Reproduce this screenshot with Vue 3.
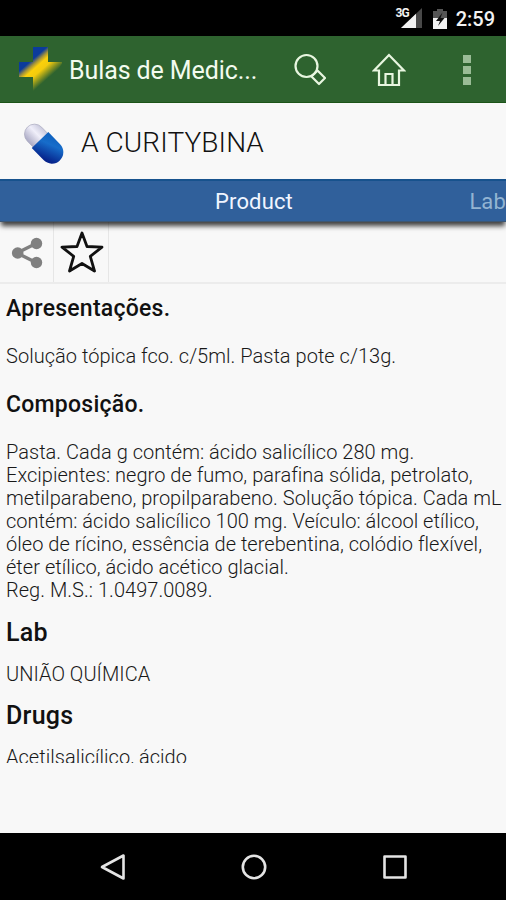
<template>
  <div class="screen">
    <!-- Status bar -->
    <header class="status-bar">
      <div class="signal">
        <span class="network">3G</span>
        <svg width="21" height="20" viewBox="0 0 21 20">
          <path d="M21 0V20H0z" fill="#484848" />
          <path d="M15 5.700V20H0z" fill="#f2f2f2" />
        </svg>
      </div>
      <svg class="battery" width="14" height="21" viewBox="0 0 14 21">
        <path d="M4 3V1h6v2h4v8H0V3z" fill="#555" />
        <path d="M0 10h14v11H0z" fill="#f2f2f2" />
        <path d="M9.500 4.500L3 13h4l-2 5 6.500-8H7.500z" fill="#111" />
      </svg>
      <span class="clock">2:59</span>
    </header>

    <!-- App bar -->
    <div class="app-bar">
      <svg class="logo" width="46" height="46" viewBox="0 0 46 46">
        <defs>
          <linearGradient id="cross" gradientUnits="userSpaceOnUse" x1="8" y1="8" x2="36" y2="40">
            <stop offset="0" stop-color="#0b3b9c" />
            <stop offset="0.23" stop-color="#0b3b9c" />
            <stop offset="0.33" stop-color="#a3923a" />
            <stop offset="0.42" stop-color="#fbd00b" />
            <stop offset="0.55" stop-color="#f3cb0d" />
            <stop offset="0.8" stop-color="#2e632f" />
          </linearGradient>
        </defs>
        <path d="M17 1h15v15h15L37 31h-5v15H17V31H3V16h14z" fill="url(#cross)" />
      </svg>
      <h1 class="app-title">Bulas de Medic...</h1>
      <button class="action search">
        <svg width="32" height="34" viewBox="0 0 32 34" fill="none" stroke="#e8f6e0" stroke-width="2.200">
          <circle cx="12.500" cy="13" r="11" />
          <path d="M17.500 23.500l6-6 7.500 7.500-6 6z" stroke-linejoin="round" />
        </svg>
      </button>
      <button class="action home">
        <svg width="34" height="34" viewBox="0 0 34 34" fill="none" stroke="#e8f6e0" stroke-width="2.200">
          <path d="M17 2L2 17.500h5V32h20V17.500h5zM13.500 32V21h7V32" />
        </svg>
      </button>
      <button class="action more"><i></i><i></i><i></i></button>
    </div>

    <!-- Medicine name -->
    <div class="medicine">
      <svg class="pill" width="42" height="42" viewBox="0 0 42 42">
        <defs>
          <linearGradient id="capWhite" x1="0" y1="0" x2="0" y2="1">
            <stop offset="0" stop-color="#c9c9dd" />
            <stop offset="0.4" stop-color="#f0effa" />
            <stop offset="1" stop-color="#aaa9c4" />
          </linearGradient>
          <linearGradient id="capBlue" x1="0" y1="0" x2="0.500" y2="1">
            <stop offset="0" stop-color="#0d5fbd" />
            <stop offset="0.4" stop-color="#176dca" />
            <stop offset="1" stop-color="#06248c" />
          </linearGradient>
        </defs>
        <g transform="translate(20.500 20.500) rotate(46)">
          <path d="M-4-10h-9a10 10 0 0 0 0 20h9z" fill="url(#capWhite)" stroke="#aaaac0" stroke-width="0.700" />
          <path d="M-5-11.500H12a11.500 11.500 0 0 1 0 23H-5z" fill="url(#capBlue)" />
        </g>
      </svg>
      <h2 class="medicine-name">A CURITYBINA</h2>
    </div>

    <!-- Tabs -->
    <nav class="tabs">
      <span class="tab active">Product</span>
      <span class="tab next">Lab</span>
    </nav>

    <!-- Share and favorite -->
    <div class="tools">
      <button class="tool share">
        <svg width="32" height="32" viewBox="0 0 32 32" fill="#808080">
          <path d="M25 6.500L6 16l19 9.500" fill="none" stroke="#808080" stroke-width="3.400" />
          <circle cx="6.700" cy="16" r="5.800" />
          <circle cx="25.500" cy="6.500" r="5.700" />
          <circle cx="25.500" cy="25.500" r="5.700" />
        </svg>
      </button>
      <button class="tool favorite">
        <svg width="46" height="44" viewBox="0 0 46 44">
          <path d="M23 3l5 13.500L43 17.200 31.300 26.300 35.500 41 23 33.500 10.500 41l4.200-14.700L3 17.200l15-.7z" fill="none" stroke="#111" stroke-width="2.800" stroke-linejoin="round" />
        </svg>
      </button>
    </div>

    <!-- Leaflet text -->
    <main class="leaflet">
      <section v-for="section in sections" :key="section.title" :class="['section', section.kind]">
        <h3>{{ section.title }}</h3>
        <p v-for="line in section.lines" :key="line">{{ line }}</p>
      </section>
    </main>

    <!-- Android navigation -->
    <footer class="nav-bar">
      <svg width="28" height="28" viewBox="0 0 28 28"><path d="M24.500 2.500v23L3 14z" /></svg>
      <svg width="28" height="28" viewBox="0 0 28 28"><circle cx="14" cy="14" r="11.200" /></svg>
      <svg width="28" height="28" viewBox="0 0 28 28"><path d="M3.500 3.500h21v21h-21z" /></svg>
    </footer>
  </div>
</template>

<script setup>
const sections = [
  {
    title: 'Apresentações.',
    kind: 'detail',
    lines: ['Solução tópica fco. c/5ml. Pasta pote c/13g.'],
  },
  {
    title: 'Composição.',
    kind: 'detail',
    lines: [
      'Pasta. Cada g contém: ácido salicílico 280 mg.',
      'Excipientes: negro de fumo, parafina sólida, petrolato,',
      'metilparabeno, propilparabeno. Solução tópica. Cada mL',
      'contém: ácido salicílico 100 mg. Veículo: álcool etílico,',
      'óleo de rícino, essência de terebentina, colódio flexível,',
      'éter etílico, ácido acético glacial.',
      'Reg. M.S.: 1.0497.0089.',
    ],
  },
  { title: 'Lab', kind: 'summary', lines: ['UNIÃO QUÍMICA'] },
  { title: 'Drugs', kind: 'summary', lines: ['Acetilsalicílico, ácido'] },
]
</script>

<style>
body {
  margin: 0;
}
</style>

<style scoped>
.screen {
  display: flex;
  flex-direction: column;
  width: 506px;
  height: 900px;
  overflow: hidden;
  background: #f8f8f8;
  font-family: Roboto, sans-serif;
  color: #111;
}
h1, h2, h3, p {
  margin: 0;
  white-space: nowrap;
}
button {
  display: flex;
  padding: 0;
  border: none;
  background: none;
}
svg {
  display: block;
  flex: none;
}
.status-bar {
  height: 36px;
  flex: none;
  display: flex;
  align-items: flex-start;
  justify-content: flex-end;
  box-sizing: border-box;
  padding: 8px 11px 0 0;
  background: #000;
  color: #f2f2f2;
}
.signal {
  display: flex;
}
.network {
  font-size: 12px;
  font-weight: 700;
  line-height: 11px;
  letter-spacing: -1px;
  margin-right: -8px;
  z-index: 1;
}
.battery {
  margin: 0 9px 0 11px;
}
.clock {
  font-size: 20px;
  font-weight: 500;
  line-height: 22px;
}
.app-bar {
  height: 67px;
  flex: none;
  display: flex;
  align-items: center;
  box-sizing: border-box;
  padding-left: 16px;
  background: #2e632f;
  border-bottom: 1px solid #1c5418;
}
.app-title {
  width: 194px;
  margin-left: 7px;
  margin-top: 3px;
  font-size: 25px;
  font-weight: 400;
  line-height: 32px;
  letter-spacing: -0.1px;
  color: #f3fbef;
}
.search {
  margin: 2px 0 0 31px;
}
.home {
  margin: 2px 0 0 46px;
}
.more {
  flex-direction: column;
  gap: 3px;
  margin: 1px 0 0 57px;
}
.more i {
  width: 8px;
  height: 8px;
  background: #9abc96;
}
.medicine {
  height: 76px;
  flex: none;
  display: flex;
  align-items: center;
  padding-left: 23px;
}
.pill {
  margin-top: 6px;
}
.medicine-name {
  margin-left: 16px;
  margin-top: 3px;
  font-size: 28px;
  font-weight: 300;
  line-height: 34px;
  letter-spacing: 0.1px;
}
.tabs {
  height: 43px;
  flex: none;
  display: flex;
  box-sizing: border-box;
  padding-left: 215px;
  background: #30609b;
  border-top: 2px solid #17528d;
  border-bottom: 1px solid #3c5673;
  box-shadow: 0 5px 5px -1px rgba(0, 0, 0, 0.75);
  z-index: 1;
}
.tab {
  font-size: 22px;
  line-height: 41px;
  letter-spacing: 0.15px;
}
.tab.active {
  width: 255px;
  color: #f0f5ff;
}
.tab.next {
  color: #93b4d2;
}
.tools {
  height: 62px;
  flex: none;
  display: flex;
  box-sizing: border-box;
  border-bottom: 2px solid #ececec;
}
.tool {
  box-sizing: border-box;
  border-right: 1px solid #e6e6e6;
}
.share {
  width: 54px;
  padding: 15px 0 0 11px;
}
.favorite {
  width: 55px;
  padding: 8px 0 0 5px;
}
.leaflet {
  height: 479px;
  flex: none;
  overflow: hidden;
  padding-left: 6px;
}
.section h3 {
  font-weight: 500;
  line-height: 28px;
  letter-spacing: 0.25px;
}
.section p {
  font-size: 20px;
  font-weight: 300;
  line-height: 23px;
  letter-spacing: 0.03px;
  color: #181818;
}
.detail {
  padding-top: 11px;
}
.detail + .detail {
  padding-top: 23px;
}
.detail h3 {
  margin-bottom: 22px;
  font-size: 23px;
}
.summary {
  padding-top: 16px;
}
.detail + .summary {
  padding-top: 17px;
}
.summary h3 {
  margin-bottom: 16px;
  font-size: 25px;
}
.nav-bar {
  margin-top: auto;
  height: 67px;
  flex: none;
  display: flex;
  align-items: center;
  justify-content: center;
  gap: 113px;
  box-sizing: border-box;
  padding-left: 2px;
  background: #000;
}
.nav-bar svg {
  fill: none;
  stroke: #e4e4e4;
  stroke-width: 2.6;
  stroke-linejoin: round;
}
</style>
